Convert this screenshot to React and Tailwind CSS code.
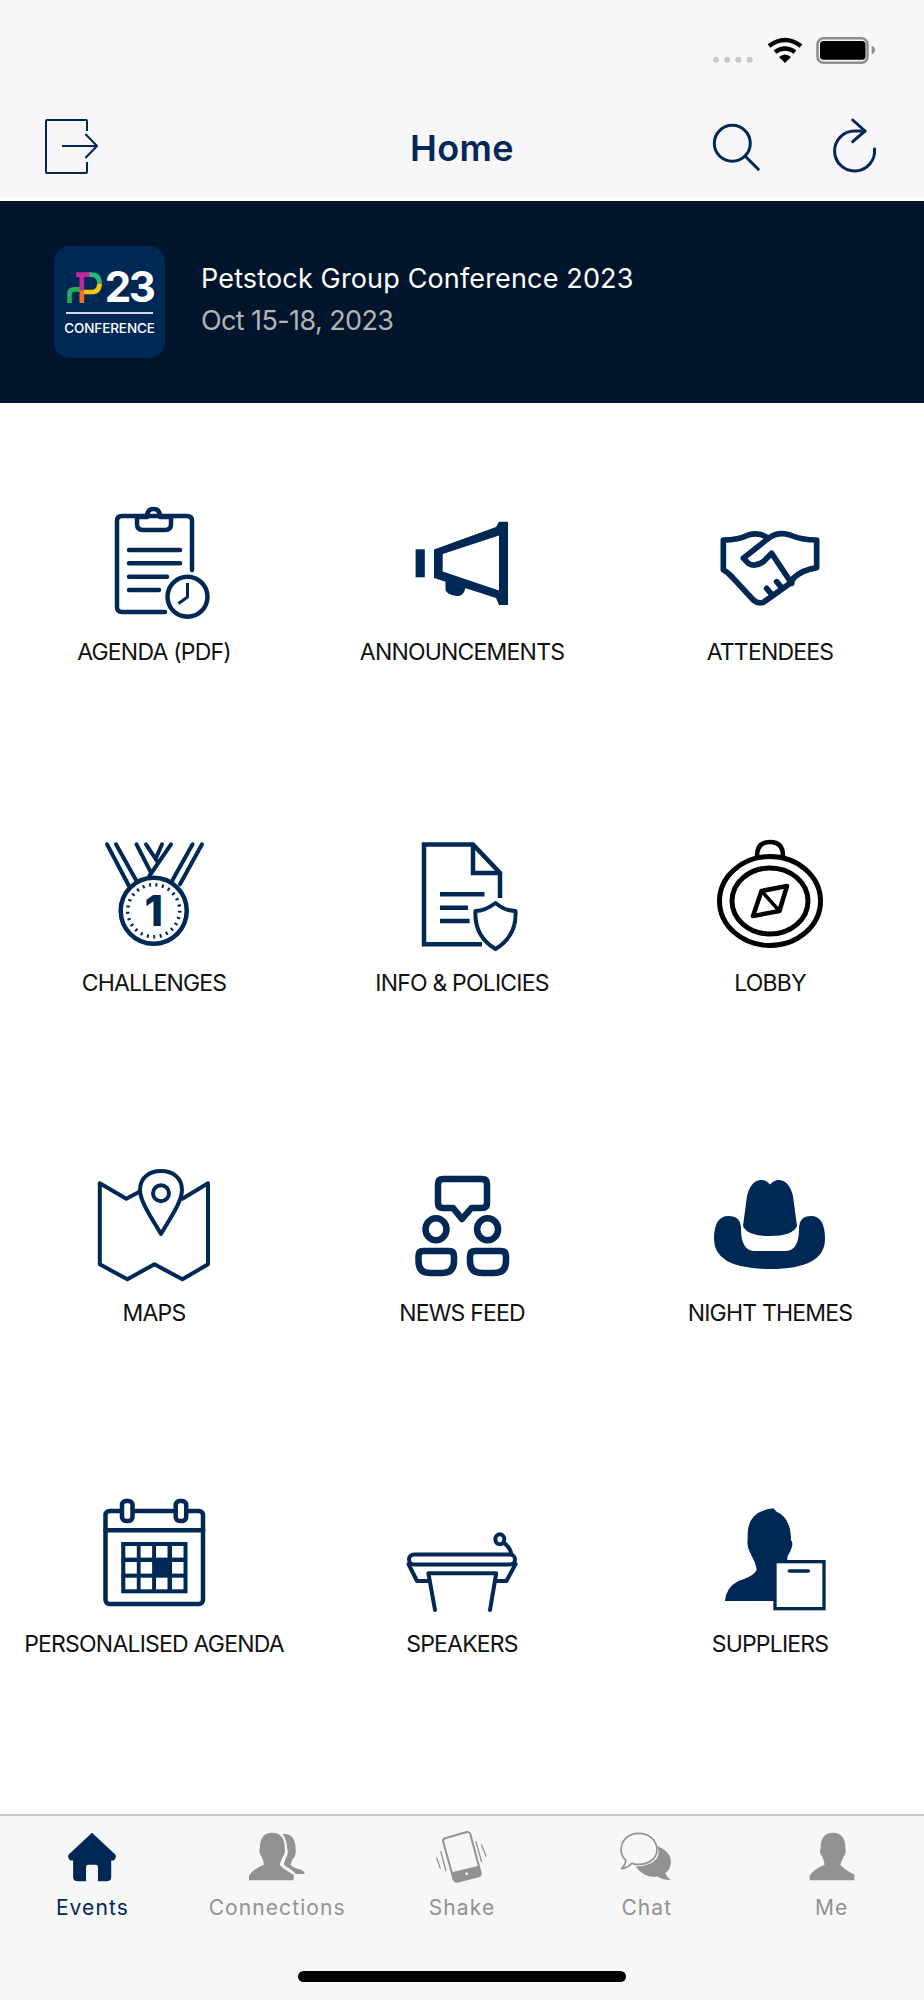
import React from 'react'

const Icon = ({ children, className = 'text-[#002855]' }) => (
  <svg viewBox="0 0 130 125" className={`w-[130px] h-[125px] ${className}`} fill="none" stroke="currentColor" strokeWidth="4.5" strokeLinecap="round" strokeLinejoin="round">
    {children}
  </svg>
)

const Agenda = () => (
  <Icon>
    <path d="M103 70V21Q103 16 98 16H33Q28 16 28 21V107Q28 112 33 112H76" />
    <path d="M48 17V24Q48 30 54 30H76Q82 30 82 24V17H71Q71 9 64.5 9Q58 9 58 17H48Z" />
    <path d="M40 50H91M40 63.3H91M40 76.7H78M40 90H70" />
    <circle cx="98.5" cy="96.7" r="20" />
    <path d="M98.5 83V97L89.5 103.5" strokeWidth="3" strokeLinecap="butt" />
  </Icon>
)

const Announcements = () => (
  <Icon>
    <g fill="currentColor" stroke="none">
      <rect x="18.6" y="49.3" width="9.2" height="28" />
      <path fillRule="evenodd" d="M37 49.5L99 27L102 21.7H111V105H102L99 98L37 78ZM45.7 54V71.5L102 90.6V35.6Z" />
      <path d="M48.5 81L68.5 88Q66 97 60 96Q50 95 48.5 90Z" />
    </g>
  </Icon>
)

const Attendees = () => (
  <Icon>
    <g transform="translate(0 15) scale(0.3333)" strokeWidth="17">
      <path d="M190 70Q165 50 130 60Q100 75 55 75V165Q70 172 85 190L145 255Q160 268 175 262L255 205Q265 195 265 190Q290 165 335 158V75Q290 75 255 60Q220 48 190 70Z" />
      <path d="M190 70L115 130L130 145Q150 158 175 140L200 115L260 205" />
      <path d="M185 220L200 238M215 200L230 218" />
    </g>
  </Icon>
)

const Challenges = () => (
  <Icon>
    <g strokeWidth="4">
      <path d="M18 13.3L40 55M27 13.3L47.5 50M47.5 13.3L62 41.7M57 13.3L68 30M82 13.3L60.3 45M73 13.3L67 27M113 13.3L91 53.3M103.6 13.3L83 50" />
    </g>
    <circle cx="64.7" cy="79.7" r="33" fill="#fff" strokeWidth="4.5" />
    <circle cx="64.7" cy="79.7" r="26" strokeWidth="3.5" strokeDasharray="2 4.5" strokeLinecap="butt" />
    <text x="64.7" y="94.5" textAnchor="middle" fontSize="42" fontWeight="800" fill="currentColor" stroke="none">1</text>
  </Icon>
)

const Policies = () => (
  <Icon>
    <g strokeLinecap="butt" strokeLinejoin="miter">
      <path d="M85 113.3H27V13.5H76L103 42V67" />
      <path d="M76 13.5V42H103" />
      <path d="M43 63.3H87.5M43 76.7H71M43 90H72.6" strokeWidth="4.5" />
    </g>
    <path d="M98.5 72Q88 80 78.5 80Q77 105 98.5 118Q120 105 118.5 80Q108 80 98.5 72Z" strokeWidth="4" />
  </Icon>
)

const Lobby = () => (
  <Icon className="text-black">
    <ellipse cx="65" cy="70" rx="50.5" ry="44.5" strokeWidth="5" />
    <ellipse cx="65" cy="70" rx="38" ry="33" strokeWidth="5" />
    <path d="M52 25Q52 11 65 11Q78 11 78 25" />
    <path d="M82 55L74.4 80L48 85L56.5 60Z" strokeWidth="4.5" />
    <path d="M56.5 60L74.4 80" strokeWidth="3.5" />
  </Icon>
)

const Maps = () => (
  <Icon>
    <g strokeWidth="4">
      <path d="M10.8 22.3L37.3 37.7L50 31M93.4 37.7L119 22.3V103.3L93.4 118.3L65.4 103.3L38.3 118.3L10.8 103.3V22.3" />
      <path d="M72 73C62 56 51 40 51 29C51 17 60 10 72 10C84 10 93 17 93 29C93 40 82 56 72 73Z" fill="#fff" />
      <circle cx="72" cy="32.3" r="8" />
    </g>
  </Icon>
)

const NewsFeed = () => (
  <Icon>
    <g strokeWidth="6.5">
      <path d="M46 18H85Q90 18 90 23V42Q90 47 85 47H74.5L65 58L56 47H46Q41 47 41 42V23Q41 18 46 18Z" />
      <ellipse cx="39" cy="68.3" rx="10.5" ry="11" />
      <ellipse cx="90.6" cy="68.3" rx="10.5" ry="11" />
      <path d="M26 90H52Q57 90 57 95V100Q57 112 45 112H33Q21.5 112 21.5 100V95Q21.5 90 26 90Z" />
      <path d="M78 90H104Q109 90 109 95V100Q109 112 97 112H85Q73 112 73 100V95Q73 90 78 90Z" />
    </g>
  </Icon>
)

const Hat = () => (
  <Icon>
    <g fill="currentColor" stroke="none">
      <path d="M38 65L42 35Q46 19 56.5 19Q61 19 65 23.5Q69 19 73.5 19Q84 19 88 35L92 65Q88 75 65 75Q42 75 38 65Z" />
      <path d="M9 78Q9 55 23.5 55Q36 55 36 68Q36 90 50 90H80Q94 90 94 68Q94 55 106 55Q120 55 120 78Q120 108 65 108Q9 108 9 78Z" />
    </g>
  </Icon>
)

const Calendar = () => {
  const xs = [36.3, 51.6, 67, 83]
  const ys = [54, 70, 85.7]
  return (
    <Icon>
      <rect x="16.5" y="19" width="97.5" height="93" rx="4" />
      <path d="M16.5 38.3H114" />
      <rect x="33" y="9" width="10.5" height="20" rx="4" fill="#fff" />
      <rect x="86.7" y="9" width="10.5" height="20" rx="4" fill="#fff" />
      <rect x="32.2" y="50" width="66.3" height="51.3" fill="currentColor" stroke="none" />
      {ys.map((y, r) =>
        xs.map((x, c) =>
          r === 1 && c === 2 ? null : <rect key={`${r}-${c}`} x={x} y={y} width="11.5" height="11.6" fill="#fff" stroke="none" />
        )
      )}
    </Icon>
  )
}

const Podium = () => (
  <Icon>
    <g strokeWidth="4">
      <rect x="12" y="62.5" width="106" height="10" rx="5" />
      <path d="M11.5 72L20 89H31M118.6 72L109.4 89H99" />
      <path d="M38 118L31.4 81.3H99.2L93 118" />
      <ellipse cx="102.8" cy="47.3" rx="4.5" ry="5" />
      <path d="M107 51Q113 55 114.5 62.3" />
    </g>
  </Icon>
)

const Suppliers = () => (
  <Icon>
    <g transform="translate(0 9) scale(0.3333)">
      <path fill="currentColor" stroke="none" d="M128 100Q128 30 205 22L215 32Q258 50 258 118Q265 125 260 140Q255 155 248 165L245 190H215V300H60Q62 260 100 240Q150 225 155 205L150 185Q140 165 133 150Q125 135 128 115Z" />
      <rect x="210" y="182" width="147" height="141" fill="#fff" strokeWidth="10" strokeLinejoin="miter" />
      <path d="M253 210H310" strokeWidth="11" />
    </g>
  </Icon>
)

const items = [
  { label: 'AGENDA (PDF)', icon: Agenda },
  { label: 'ANNOUNCEMENTS', icon: Announcements },
  { label: 'ATTENDEES', icon: Attendees },
  { label: 'CHALLENGES', icon: Challenges },
  { label: 'INFO & POLICIES', icon: Policies },
  { label: 'LOBBY', icon: Lobby },
  { label: 'MAPS', icon: Maps },
  { label: 'NEWS FEED', icon: NewsFeed },
  { label: 'NIGHT THEMES', icon: Hat },
  { label: 'PERSONALISED AGENDA', icon: Calendar },
  { label: 'SPEAKERS', icon: Podium },
  { label: 'SUPPLIERS', icon: Suppliers },
]

const person = 'M697 38Q735 38 735 85Q738 100 730 110Q722 125 720 135Q725 145 762 165V182H627V168Q640 148 672 135Q672 125 665 110Q655 100 660 85Q660 38 697 38Z'

const tabs = [
  {
    label: 'Events',
    active: true,
    box: '67 30 180 160',
    draw: <path fill="currentColor" d="M157 38L228 105Q232 115 222 122H215V172Q215 185 200 185H175V140Q175 135 168 135H146Q139 135 139 140V185H115Q100 185 100 172V122H92Q82 115 86 105Z" />,
  },
  {
    label: 'Connections',
    box: '621.6 30 180 160',
    draw: (
      <g fill="currentColor">
        <path d="M728 42Q768 38 768 90Q770 100 765 110Q755 120 752 135Q760 145 785 150Q795 155 795 163H768Q758 150 735 138Q730 132 738 115Q748 100 742 85Q742 60 728 42Z" />
        <path d={person} stroke="#f7f7f7" strokeWidth="10" paintOrder="stroke" />
      </g>
    ),
  },
  {
    label: 'Shake',
    box: '96 30 180 160',
    draw: (
      <g fill="none" stroke="currentColor" strokeLinecap="round" strokeLinejoin="round">
        <path strokeWidth="6" d="M135 55L200 36Q208 35 211 42L242 158Q244 168 236 170L172 186Q164 187 161 180L129 65Q128 57 135 55Z" />
        <path fill="currentColor" stroke="none" d="M158 157L237 138L242 158Q244 168 236 170L172 186Q164 187 161 180Z" />
        <circle cx="200" cy="162" r="4" fill="#f7f7f7" stroke="none" />
        <path strokeWidth="4" d="M228 65L245 125M245 75L258 108M122 95L137 152M110 115L120 145" />
      </g>
    ),
  },
  {
    label: 'Chat',
    box: '650 30 180 160',
    draw: (
      <g>
        <path fill="currentColor" d="M770 78Q812 95 812 125Q812 150 795 160Q802 175 812 180Q790 182 772 170Q735 178 705 140Q750 140 770 115Q780 95 770 78Z" />
        <path fill="none" stroke="currentColor" strokeWidth="5" strokeLinejoin="round" d="M715 40C745 40 770 60 770 90C770 115 745 134 715 134Q700 134 695 130Q680 145 663 147Q678 132 675 120Q662 108 662 90C662 60 685 40 715 40Z" />
      </g>
    ),
  },
  {
    label: 'Me',
    box: '604.5 30 180 160',
    draw: <path fill="currentColor" d={person} />,
  },
]

const ConferenceLogo = () => (
  <div className="w-[111px] h-[112px] rounded-[16px] bg-[#002855] flex flex-col items-center pt-[25px] shrink-0 text-white">
    <div className="flex items-center gap-[3px] h-[32px]">
      <svg viewBox="80 110 107 93" className="w-[36px] h-[31px]" fill="none" strokeWidth="14">
        <path d="M145 118H155Q180 118 180 145" stroke="#2bb673" />
        <path d="M180 145Q180 170 155 170H127" stroke="#f5c518" />
        <path d="M90 203V175Q90 162 105 162H125" stroke="#1fae5c" />
        <path d="M127 165V203" stroke="#f37021" />
        <path d="M110 118H150M127 118V165" stroke="#c4259b" />
      </svg>
      <span className="text-[42px] leading-[32px] font-bold tracking-[-2.5px]">23</span>
    </div>
    <div className="w-[87px] h-[2px] bg-[#d5dbe6] mt-[9px]" />
    <div className="text-[13.5px] leading-[16px] font-medium mt-[6px] tracking-[-0.1px]">CONFERENCE</div>
  </div>
)

export default function App() {
  return (
    <div className="w-[924px] h-[2000px] flex flex-col bg-white font-['Inter',sans-serif]">
      <div className="h-[197px] shrink-0 bg-[#f8f6f9]">
        <div className="h-[116px] flex justify-end pt-[37px] pr-[48px]">
          <svg viewBox="0 0 164 28" className="w-[164px] h-[28px]">
            <g fill="#c8c8c8">
              <circle cx="4" cy="22.7" r="3" />
              <circle cx="15.3" cy="22.7" r="3" />
              <circle cx="26.3" cy="22.7" r="3" />
              <circle cx="37.7" cy="22.7" r="3" />
            </g>
            <path fill="none" stroke="#000" strokeWidth="4.5" d="M57 9Q73 -3 89 9M63 15Q73 8 83 15" />
            <path d="M67 20Q73 15 79 20L73 26Z" fill="#000" />
            <rect x="105.5" y="1.3" width="50" height="24.5" rx="6" fill="none" stroke="#8e8e8e" strokeWidth="2.5" />
            <rect x="108" y="4" width="45.5" height="18.7" rx="3.5" fill="#000" />
            <path d="M159.7 8.7Q163 10 163 13.3Q163 16 159.7 17.3Z" fill="#8e8e8e" />
          </svg>
        </div>
        <div className="grid grid-cols-3 items-center h-[60px] text-[#002855]">
          <div className="pl-[40px]">
            <svg viewBox="0 0 60 60" className="w-[60px] h-[60px]" fill="none" stroke="currentColor" strokeWidth="2" strokeLinejoin="round">
              <path d="M47 15V5Q47 4 46 4H7Q6 4 6 5V56Q6 57 7 57H46Q47 57 47 56V46" />
              <path d="M22 30H57M45.4 18L57 30L45.4 42" />
            </svg>
          </div>
          <div className="text-center text-[36px] leading-[44px] font-semibold tracking-[0.4px] pt-[3px]">Home</div>
          <div className="flex justify-end gap-[63px] pr-[39px]">
            <svg viewBox="0 0 60 60" className="w-[60px] h-[60px]" fill="none" stroke="currentColor" strokeWidth="3" strokeLinecap="round">
              <circle cx="30.3" cy="27.3" r="18" />
              <path d="M43 40L56.3 53.3" />
            </svg>
            <svg viewBox="0 0 60 60" className="w-[60px] h-[60px]" fill="none" stroke="currentColor" strokeWidth="3" strokeLinecap="round" strokeLinejoin="round">
              <path d="M27.7 4L40 15L27.7 25.7" />
              <path d="M40 15H30A20 20 0 1 0 49.5 33" />
            </svg>
          </div>
        </div>
      </div>

      <div className="mt-[4px] h-[202px] shrink-0 bg-[#00152b] flex items-center pl-[54px] gap-[36px]">
        <ConferenceLogo />
        <div className="flex flex-col gap-[9px] pb-[6px]">
          <div className="text-[27px] leading-[33px] text-white tracking-[0.15px]">Petstock Group Conference 2023</div>
          <div className="text-[27px] leading-[33px] text-[#b4b4b4] tracking-[-0.6px]">Oct 15-18, 2023</div>
        </div>
      </div>

      <div className="flex-1 min-h-0 grid grid-cols-3 auto-rows-[330.5px] pt-[97px]">
        {items.map(({ label, icon: Glyph }) => (
          <div key={label} className="flex flex-col items-center">
            <Glyph />
            <div className="mt-[13px] text-[23px] leading-[28px] text-[#111] tracking-[-0.8px] whitespace-nowrap">{label}</div>
          </div>
        ))}
      </div>

      <div className="h-[186px] shrink-0 border-t-2 border-[#c8c8c8] bg-[#f7f7f7] flex flex-col">
        <div className="grid grid-cols-5 pt-[14px]">
          {tabs.map((t) => (
            <div key={t.label} className={`flex flex-col items-center ${t.active ? 'text-[#002855]' : 'text-[#929292]'}`}>
              <svg viewBox={t.box} className="w-[60px] h-[53px]">{t.draw}</svg>
              <div className="mt-[12px] text-[21px] leading-[26px] tracking-[1.1px]">{t.label}</div>
            </div>
          ))}
        </div>
        <div className="mt-auto mb-[18px] mx-auto w-[328px] h-[11px] rounded-full bg-black" />
      </div>
    </div>
  )
}
